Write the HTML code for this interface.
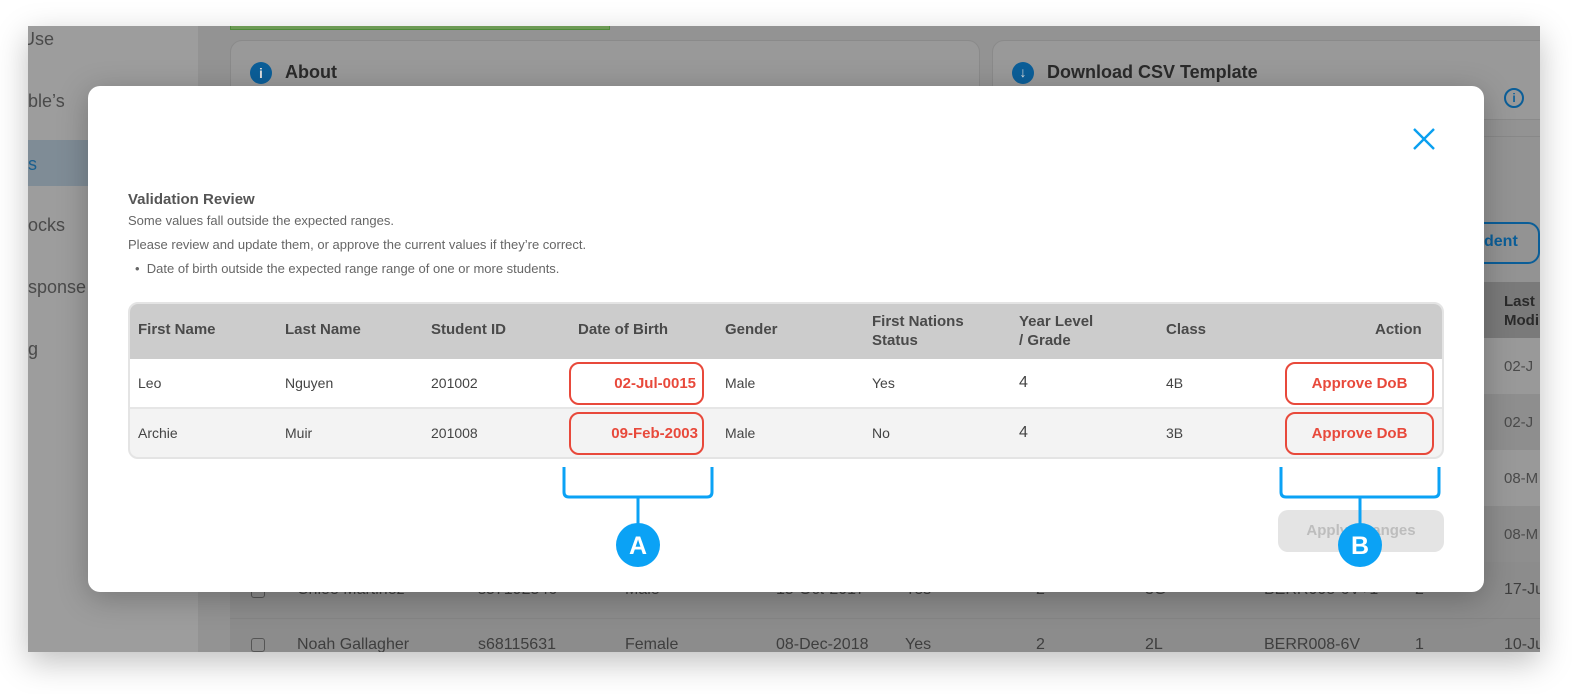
<!DOCTYPE html>
<html style="overflow:hidden;width:1572px;height:694px"><head><meta charset="utf-8"><style>
*{box-sizing:border-box;margin:0;padding:0}
html,body{overflow:hidden}
body{width:1572px;height:694px;background:#fff;position:relative;font-family:"Liberation Sans",Arial,sans-serif}
.abs{position:absolute}
#shot{left:28px;top:26px;width:1512px;height:626px;background:#979797;overflow:hidden;box-shadow:0 10px 30px rgba(0,0,0,.25)}
.t{position:absolute;white-space:nowrap}
</style></head><body>
<div id="shot" class="abs">
  <div class="abs" style="left:0;top:0;width:170px;height:626px;background:#9d9d9d"></div>
  <div class="abs" style="left:0;top:114px;width:170px;height:46px;background:#7f8c96"></div>
  <div class="t" style="left:-6px;top:3px;font-size:18px;color:#4a4a4a">Use</div>
  <div class="t" style="left:0;top:65px;font-size:18px;color:#4a4a4a">ble’s</div>
  <div class="t" style="left:0;top:128px;font-size:18px;color:#1a5f8e">s</div>
  <div class="t" style="left:0;top:189px;font-size:18px;color:#4a4a4a">ocks</div>
  <div class="t" style="left:0;top:251px;font-size:18px;color:#4a4a4a">sponse</div>
  <div class="t" style="left:0;top:313px;font-size:18px;color:#4a4a4a">g</div>
  <div class="abs" style="left:170px;top:0;width:1342px;height:626px;background:#939393"></div>
  <div class="abs" style="left:202px;top:-4px;width:380px;height:8px;background:#6d9a55;border:1px solid #4f8a3a"></div>
  <div class="abs" style="left:202px;top:14px;width:750px;height:80px;background:#999;border:1px solid #8a8a8a;border-radius:12px"></div>
  <div class="abs" style="left:222px;top:36px;width:22px;height:22px;border-radius:50%;background:#0b5e98;color:#ddd;font-size:14px;font-weight:bold;text-align:center;line-height:22px">i</div>
  <div class="t" style="left:257px;top:36px;font-size:18px;font-weight:bold;color:#2a2a2a">About</div>
  <div class="abs" style="left:964px;top:14px;width:560px;height:80px;background:#999;border:1px solid #8a8a8a;border-radius:12px"></div>
  <div class="abs" style="left:984px;top:36px;width:22px;height:22px;border-radius:50%;background:#0b5e98;color:#ddd;font-size:14px;font-weight:bold;text-align:center;line-height:20px">↓</div>
  <div class="t" style="left:1019px;top:36px;font-size:18px;font-weight:bold;color:#2a2a2a">Download CSV Template</div>
  <div class="abs" style="left:1476px;top:62px;width:20px;height:20px;border-radius:50%;border:2px solid #0b5e98;color:#0b5e98;font-size:12px;font-weight:bold;text-align:center;line-height:16px">i</div>
  <div class="abs" style="left:1456px;top:110px;width:56px;height:1px;background:#888"></div>
  <div class="abs" style="left:1400px;top:196px;width:112px;height:42px;border:2px solid #0b5e98;border-radius:12px"></div>
  <div class="t" style="left:1456px;top:207px;font-size:16px;font-weight:bold;color:#0b5e98">dent</div>
  <div class="abs" style="left:1456px;top:256px;width:56px;height:56px;background:#7a7a7a"></div>
  <div class="t" style="left:1476px;top:266px;font-size:15px;font-weight:bold;color:#2a2a2a;line-height:19px">Last<br>Modi</div>
  <div class="abs" style="left:1456px;top:312px;width:56px;height:56px;background:#999"></div>
  <div class="abs" style="left:1456px;top:368px;width:56px;height:56px;background:#8e8e8e"></div>
  <div class="abs" style="left:1456px;top:424px;width:56px;height:56px;background:#999"></div>
  <div class="abs" style="left:1456px;top:480px;width:56px;height:56px;background:#8e8e8e"></div>
  <div class="t" style="left:1476px;top:332px;font-size:15px;color:#4a4a4a">02-J</div>
  <div class="t" style="left:1476px;top:388px;font-size:15px;color:#4a4a4a">02-J</div>
  <div class="t" style="left:1476px;top:444px;font-size:15px;color:#4a4a4a">08-M</div>
  <div class="t" style="left:1476px;top:500px;font-size:15px;color:#4a4a4a">08-M</div>
  <div class="abs" style="left:202px;top:536px;width:1310px;height:90px;background:#8c8c8c"></div>
  <div class="abs" style="left:202px;top:592px;width:1310px;height:1px;background:#858585"></div>
  <div class="abs" style="left:223px;top:558px;width:14px;height:14px;border:1px solid #555;border-radius:3px"></div>
  <div class="abs" style="left:223px;top:612px;width:14px;height:14px;border:1px solid #555;border-radius:3px"></div>
  <div class="t" style="left:269px;top:555px;font-size:16px;color:#3e3e3e">Chloe Martinez</div>
  <div class="t" style="left:450px;top:555px;font-size:16px;color:#3e3e3e">s57192546</div>
  <div class="t" style="left:597px;top:555px;font-size:16px;color:#3e3e3e">Male</div>
  <div class="t" style="left:748px;top:555px;font-size:16px;color:#3e3e3e">15-Oct-2017</div>
  <div class="t" style="left:877px;top:555px;font-size:16px;color:#3e3e3e">Yes</div>
  <div class="t" style="left:1008px;top:555px;font-size:16px;color:#3e3e3e">2</div>
  <div class="t" style="left:1117px;top:555px;font-size:16px;color:#3e3e3e">3G</div>
  <div class="t" style="left:1236px;top:555px;font-size:16px;color:#3e3e3e">BERR008-6V+1</div>
  <div class="t" style="left:1387px;top:555px;font-size:16px;color:#3e3e3e">2</div>
  <div class="t" style="left:1476px;top:555px;font-size:16px;color:#3e3e3e">17-Ju</div>
  <div class="t" style="left:269px;top:610px;font-size:16px;color:#3e3e3e">Noah Gallagher</div>
  <div class="t" style="left:450px;top:610px;font-size:16px;color:#3e3e3e">s68115631</div>
  <div class="t" style="left:597px;top:610px;font-size:16px;color:#3e3e3e">Female</div>
  <div class="t" style="left:748px;top:610px;font-size:16px;color:#3e3e3e">08-Dec-2018</div>
  <div class="t" style="left:877px;top:610px;font-size:16px;color:#3e3e3e">Yes</div>
  <div class="t" style="left:1008px;top:610px;font-size:16px;color:#3e3e3e">2</div>
  <div class="t" style="left:1117px;top:610px;font-size:16px;color:#3e3e3e">2L</div>
  <div class="t" style="left:1236px;top:610px;font-size:16px;color:#3e3e3e">BERR008-6V</div>
  <div class="t" style="left:1387px;top:610px;font-size:16px;color:#3e3e3e">1</div>
  <div class="t" style="left:1476px;top:610px;font-size:16px;color:#3e3e3e">10-Ju</div>
</div>

<div class="abs" style="left:88px;top:86px;width:1396px;height:506px;background:#fff;border-radius:12px;box-shadow:0 6px 30px rgba(0,0,0,.25)"></div>
<svg class="abs" style="left:1412px;top:127px" width="24" height="24"><path d="M2 2L22 22M22 2L2 22" stroke="#0aa0f0" stroke-width="2.4"/></svg>
<div class="t" style="left:128px;top:191px;font-size:15px;font-weight:bold;color:#555">Validation Review</div>
<div class="t" style="left:128px;top:213px;font-size:13px;color:#666">Some values fall outside the expected ranges.</div>
<div class="t" style="left:128px;top:237px;font-size:13px;color:#666">Please review and update them, or approve the current values if they’re correct.</div>
<div class="t" style="left:135px;top:261px;font-size:13px;color:#666">•&nbsp; Date of birth outside the expected range range of one or more students.</div>

<div class="abs" style="left:128px;top:302px;width:1316px;height:157px;border:2px solid #e4e4e4;border-radius:10px;overflow:hidden;background:#f3f3f3">
  <div class="abs" style="left:0;top:0;width:100%;height:55px;background:#cccccc"></div>
  <div class="abs" style="left:0;top:55px;width:100%;height:50px;background:#fff;border-bottom:2px solid #e6e6e6"></div>
</div>
<div style="font-size:15px;font-weight:bold;color:#4a4a4a">
<div class="t" style="left:138px;top:321px">First Name</div>
<div class="t" style="left:285px;top:321px">Last Name</div>
<div class="t" style="left:431px;top:321px">Student ID</div>
<div class="t" style="left:578px;top:321px">Date of Birth</div>
<div class="t" style="left:725px;top:321px">Gender</div>
<div class="t" style="left:872px;top:312px;line-height:19px">First Nations<br>Status</div>
<div class="t" style="left:1019px;top:312px;line-height:19px">Year Level<br>/ Grade</div>
<div class="t" style="left:1166px;top:321px">Class</div>
<div class="t" style="left:1375px;top:321px">Action</div>
</div>
<div style="font-size:14px;color:#444">
<div class="t" style="left:138px;top:375px">Leo</div>
<div class="t" style="left:285px;top:375px">Nguyen</div>
<div class="t" style="left:431px;top:375px">201002</div>
<div class="t" style="left:725px;top:375px">Male</div>
<div class="t" style="left:872px;top:375px">Yes</div>
<div class="t" style="left:1019px;top:374px;font-size:16px">4</div>
<div class="t" style="left:1166px;top:375px">4B</div>
<div class="t" style="left:138px;top:425px">Archie</div>
<div class="t" style="left:285px;top:425px">Muir</div>
<div class="t" style="left:431px;top:425px">201008</div>
<div class="t" style="left:725px;top:425px">Male</div>
<div class="t" style="left:872px;top:425px">No</div>
<div class="t" style="left:1019px;top:424px;font-size:16px">4</div>
<div class="t" style="left:1166px;top:425px">3B</div>
</div>
<div class="abs" style="left:569px;top:362px;width:135px;height:43px;border:2px solid #e8493b;border-radius:10px;color:#e8493b;font-size:15px;font-weight:bold;text-align:right;padding-right:6px;line-height:39px;background:#fff">02-Jul-0015</div>
<div class="abs" style="left:569px;top:412px;width:135px;height:43px;border:2px solid #e8493b;border-radius:10px;color:#e8493b;font-size:15px;font-weight:bold;text-align:right;padding-right:4px;line-height:39px;background:#f3f3f3">09-Feb-2003</div>
<div class="abs" style="left:1285px;top:362px;width:149px;height:43px;border:2px solid #e8493b;border-radius:10px;color:#e8493b;font-size:15px;font-weight:bold;text-align:center;line-height:39px;background:#fff">Approve DoB</div>
<div class="abs" style="left:1285px;top:412px;width:149px;height:43px;border:2px solid #e8493b;border-radius:10px;color:#e8493b;font-size:15px;font-weight:bold;text-align:center;line-height:39px;background:#f3f3f3">Approve DoB</div>

<div class="abs" style="left:1278px;top:510px;width:166px;height:42px;background:#e4e4e4;border-radius:10px;color:#bdbdbd;font-size:15px;font-weight:bold;text-align:center;line-height:42px">Apply Changes</div>

<svg class="abs" style="left:0;top:0" width="1572" height="694">
  <g fill="none" stroke="#0ba2f5" stroke-width="3">
    <path d="M564 467V492Q564 497 569 497H707Q712 497 712 492V467M638 497V525"/>
    <path d="M1281 467V492Q1281 497 1286 497H1434Q1439 497 1439 492V467M1360 497V525"/>
  </g>
  <circle cx="638" cy="545" r="22" fill="#0ba2f5"/>
  <circle cx="1360" cy="545" r="22" fill="#0ba2f5"/>
  <text x="638" y="554" text-anchor="middle" font-family="Liberation Sans" font-weight="bold" font-size="25" fill="#fff">A</text>
  <text x="1360" y="554" text-anchor="middle" font-family="Liberation Sans" font-weight="bold" font-size="25" fill="#fff">B</text>
</svg>
</body></html>
